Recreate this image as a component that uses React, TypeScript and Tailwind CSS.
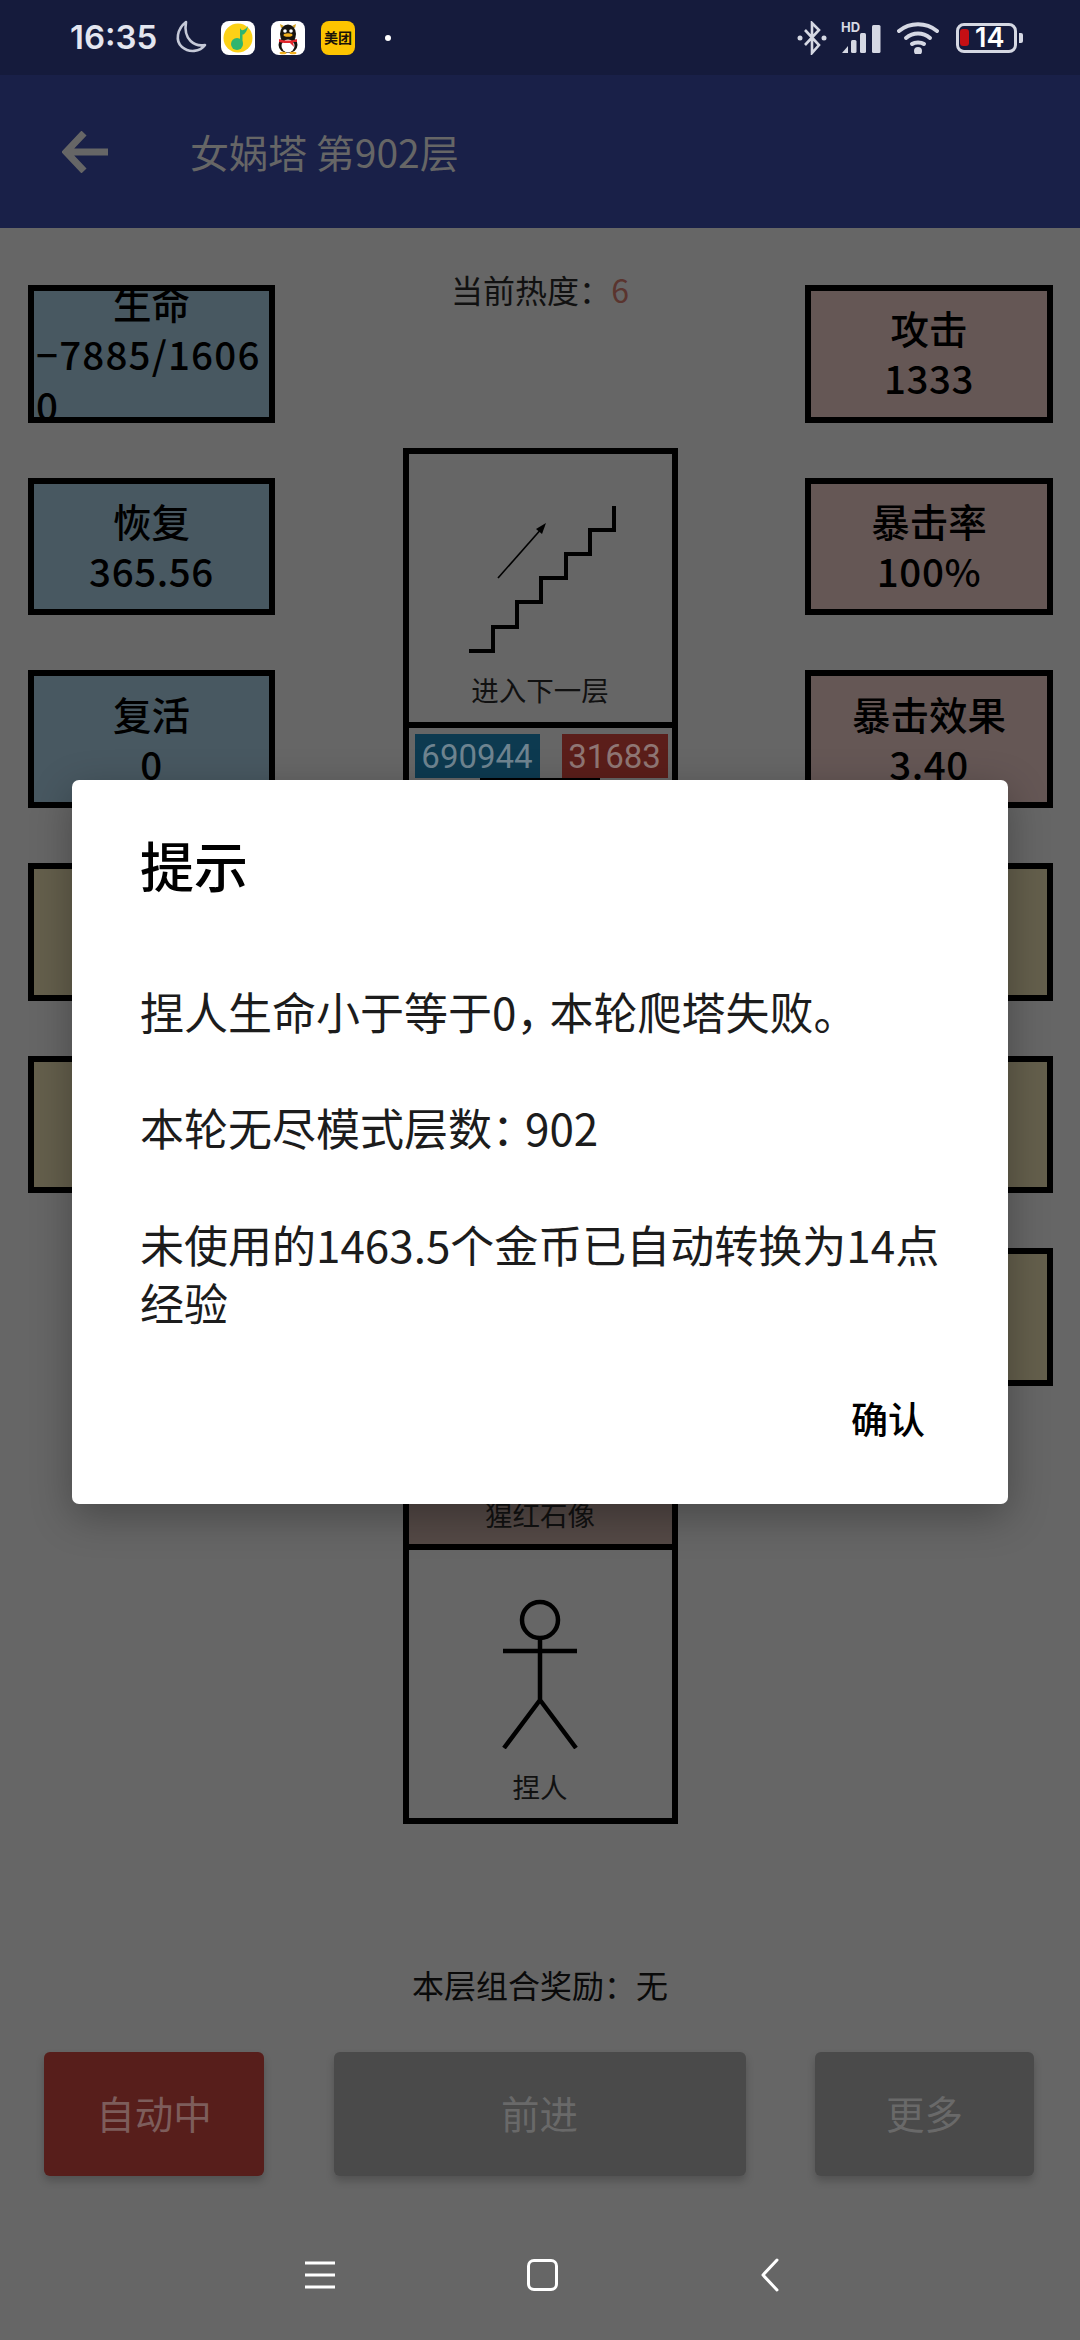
import React from 'react';

const Stat = ({ label, value, bg }: { label: string; value: string; bg: string }) => (
    <div className={`h-[137.5px] shrink-0 border-[6px] border-black flex flex-col items-center justify-center pb-[3px] text-[38.5px] leading-[50px] font-medium text-black ${bg}`}>
        <div>{label}</div>
        <div className="tracking-[0.6px]">{value}</div>
    </div>
);

const MusicIcon = () => (
    <svg width="34" height="34" viewBox="0 0 34 34">
        <rect width="34" height="34" rx="8" fill="#fff" />
        <circle cx="17" cy="17" r="14.5" fill="#fcd116" />
        <circle cx="16" cy="23" r="6" fill="#2fb56f" />
        <path d="M19 23 V7 C21 11 24 9 27 5 C26 11 23 14 21.5 13.5 V23 Z" fill="#2fb56f" />
    </svg>
);

const PenguinIcon = () => (
    <svg width="34" height="34" viewBox="0 0 34 34">
        <rect width="34" height="34" rx="8" fill="#fff" />
        <path d="M10 7 L9 3 L13 5 M24 7 L25 3 L21 5" fill="#d7a21d" />
        <ellipse cx="17" cy="13" rx="8" ry="9.5" fill="#17130f" />
        <ellipse cx="17" cy="24" rx="9.5" ry="8" fill="#17130f" />
        <ellipse cx="17" cy="25" rx="6.5" ry="6.5" fill="#fff" />
        <circle cx="14" cy="10" r="1.8" fill="#fff" />
        <circle cx="20" cy="10" r="1.8" fill="#fff" />
        <ellipse cx="17" cy="14" rx="4.5" ry="1.8" fill="#f2b01e" />
        <path d="M8 18 C13 20 21 20 26 18 L26 21 L22 21 L23 26 L19 22 C15 22 11 22 8 21 Z" fill="#e3262a" />
        <ellipse cx="12" cy="32" rx="3.5" ry="1.3" fill="#f2b01e" />
        <ellipse cx="22" cy="32" rx="3.5" ry="1.3" fill="#f2b01e" />
    </svg>
);

const StatusBar = () => (
    <div className="h-[75px] bg-[#151b3c] flex items-center shrink-0 pl-[70px] pr-[57px] font-['Inter','Noto_Sans_CJK_SC',sans-serif]">
        <span className="text-[33px] font-semibold text-[#e3e6f0] w-[104px] leading-none">16:35</span>
        <svg width="33" height="34" viewBox="0 0 33 34" fill="none" className="-mt-[1px]">
            <path d="M12 2 C3 9 1 21 8 27 C15 33 26 32 31 25 C21 27 9 20 12 2 Z" stroke="#c5c9d8" strokeWidth="2.6" strokeLinejoin="round" />
        </svg>
        <div className="ml-[14px]"><MusicIcon /></div>
        <div className="ml-[16px]"><PenguinIcon /></div>
        <div className="ml-[16px] w-[34px] h-[34px] rounded-[8px] bg-[#fdc400] flex items-center justify-center text-[14px] leading-none font-bold text-[#1a1208] whitespace-nowrap">美团</div>
        <div className="ml-[30px] w-[6px] h-[6px] rounded-full bg-white" />
        <div className="flex-1" />
        <svg width="30" height="34" viewBox="0 0 30 34" fill="none">
            <path d="M8 9 L22 24 L15 32 V2 L22 9 L8 24" stroke="#d5d8e3" strokeWidth="2.6" />
            <circle cx="3" cy="17" r="2.5" fill="#d5d8e3" />
            <circle cx="27" cy="17" r="2.5" fill="#d5d8e3" />
        </svg>
        <div className="relative ml-[14px] w-[40px] h-[32px]">
            <span className="absolute left-0 -top-[1px] text-[13px] leading-[13px] font-bold text-[#d5d8e3]">HD</span>
            <svg width="40" height="32" viewBox="0 0 40 32" fill="#d5d8e3" className="absolute inset-0">
                <path d="M1 31 L7 24 V31 Z" />
                <rect x="10" y="18" width="5.5" height="13" rx="1.5" />
                <rect x="19" y="11" width="6" height="20" rx="1.5" />
                <rect x="31" y="3" width="8.5" height="28" rx="1.5" />
            </svg>
        </div>
        <svg width="42" height="32" viewBox="0 0 42 32" fill="none" stroke="#d5d8e3" strokeWidth="4" strokeLinecap="round" className="ml-[16px]">
            <path d="M2 9 C13 0 29 0 40 9" />
            <path d="M9 16 C16 10 26 10 33 16" />
            <path d="M15 22 C18 20 24 20 27 22" />
            <circle cx="21" cy="29" r="2" fill="#d5d8e3" />
        </svg>
        <div className="ml-[17px] relative w-[61px] h-[30px] rounded-[8px] border-[3.5px] border-[#d5d8e3] flex items-center">
            <div className="ml-[1px] w-[9px] h-[17px] rounded-[3px] bg-[#c40f14]" />
            <span className="ml-[6px] text-[27px] leading-none font-semibold text-white">14</span>
        </div>
        <div className="ml-[2px] w-[4px] h-[10px] rounded-r-[2px] bg-[#d5d8e3]" />
    </div>
);

const App = () => {
    return (
        <div className="relative w-[1080px] h-[2340px] bg-[#666666] overflow-hidden flex flex-col font-['Noto_Sans_CJK_SC',sans-serif]">
            <StatusBar />

            {/* App bar */}
            <div className="h-[153px] bg-[#192048] flex items-center shrink-0 pl-[62px]">
                <svg width="46" height="42" viewBox="0 0 46 42" fill="none" stroke="#666666" strokeWidth="7">
                    <path d="M22 2 L4 21 L22 40 M4 21 H46" />
                </svg>
                <span className="ml-[82px] text-[39px] text-[#666666] whitespace-nowrap">女娲塔 第902层</span>
            </div>

            {/* Board */}
            <div className="flex justify-between pl-[28px] pr-[27px] h-[1596px] shrink-0">
                <div className="w-[247px] flex flex-col gap-[55.2px] pt-[57px]">
                    <div className="h-[137.5px] shrink-0 border-[6px] border-black bg-[#485861] overflow-hidden flex flex-col justify-center text-[38.5px] leading-[51px] font-medium text-black">
                        <div className="text-center shrink-0">生命</div>
                        <div className="shrink-0 break-all pl-[2px] tracking-[1.2px]">−7885/16060</div>
                    </div>
                    <Stat label="恢复" value="365.56" bg="bg-[#485861]" />
                    <Stat label="复活" value="0" bg="bg-[#485861]" />
                    <div className="h-[137.5px] shrink-0 border-[6px] border-black bg-[#645f4c]" />
                    <div className="h-[137.5px] shrink-0 border-[6px] border-black bg-[#645f4c]" />
                </div>

                <div className="w-[275px] flex flex-col items-center">
                    <div className="h-[220px] w-full shrink-0 pt-[37px] text-center text-[32px] leading-[48px] text-[#111111] whitespace-nowrap">
                        当前热度：<span className="text-[#5a342e]">6</span>
                    </div>

                    <div className="h-[280px] w-full shrink-0 border-[6px] border-black flex flex-col items-center">
                        <svg width="150" height="152" viewBox="0 0 150 152" fill="none" stroke="#000" className="mt-[50px] ml-[5px] shrink-0">
                            <path d="M1 147 H25 V123 H49 V98 H73 V74 H98 V50 H122 V26 H146 V2" strokeWidth="4" />
                            <path d="M30 74 L75 23" strokeWidth="1.6" />
                            <path d="M78 19 L74 30 L68 25 Z" fill="#000" stroke="none" />
                        </svg>
                        <div className="text-[27.5px] leading-[36px] text-[#111111] mt-[15px]">进入下一层</div>
                    </div>

                    <div className="h-[280px] w-full -mt-[6px] shrink-0 border-[6px] border-black">
                        <div className="flex justify-between pl-[6px] pr-[4px] pt-[6px]">
                            <div className="w-[125px] h-[44px] bg-[#0d3a50] text-center text-[33px] leading-[46px] text-[#6f8490] font-['Roboto',sans-serif]">690944</div>
                            <div className="w-[106px] h-[44px] bg-[#5b1e1a] text-center text-[33px] leading-[46px] text-[#8f7674] font-['Roboto',sans-serif]">31683</div>
                        </div>
                        <div className="w-[120px] h-[8px] mx-auto bg-black" />
                    </div>

                    <div className="h-[280px] w-full -mt-[6px] shrink-0 border-[6px] border-black" />

                    <div className="h-[280px] w-full -mt-[6px] shrink-0 border-[6px] border-black bg-[#544946] flex flex-col justify-end items-center">
                        <div className="text-[27.5px] leading-[36px] text-[#111111] pb-[12px]">猩红石像</div>
                    </div>

                    <div className="h-[280px] w-full -mt-[6px] shrink-0 border-[6px] border-black flex flex-col items-center">
                        <svg width="78" height="150" viewBox="0 0 78 150" fill="none" stroke="#000" strokeWidth="4.5" className="mt-[49px] shrink-0">
                            <circle cx="39" cy="21" r="18" />
                            <path d="M39 40 V101 M2 52 H76 M39 101 L3 149 M39 101 L75 149" />
                        </svg>
                        <div className="text-[27.5px] leading-[36px] text-[#111111] mt-[19px]">捏人</div>
                    </div>
                </div>

                <div className="w-[248px] flex flex-col gap-[55.2px] pt-[57px]">
                    <Stat label="攻击" value="1333" bg="bg-[#655755]" />
                    <Stat label="暴击率" value="100%" bg="bg-[#655755]" />
                    <Stat label="暴击效果" value="3.40" bg="bg-[#655755]" />
                    <div className="h-[137.5px] shrink-0 border-[6px] border-black bg-[#645f4c]" />
                    <div className="h-[137.5px] shrink-0 border-[6px] border-black bg-[#645f4c]" />
                    <div className="h-[137.5px] shrink-0 border-[6px] border-black bg-[#645f4c]" />
                </div>
            </div>

            {/* Bottom actions */}
            <div className="text-center text-[32px] leading-[48px] text-[#0a0a0a] mt-[136px] shrink-0 whitespace-nowrap">本层组合奖励：无</div>
            <div className="flex justify-between pl-[44px] pr-[46px] mt-[44px] shrink-0 text-[38.5px]">
                <div className="w-[220px] h-[124px] rounded-[6px] bg-[#571e1b] text-[#7d5d5b] flex items-center justify-center pb-[3px] shadow-[0_5px_8px_rgba(0,0,0,0.2)]">自动中</div>
                <div className="w-[412px] h-[124px] rounded-[6px] bg-[#4a4a4a] text-[#696969] flex items-center justify-center pb-[3px] shadow-[0_5px_8px_rgba(0,0,0,0.2)]">前进</div>
                <div className="w-[219px] h-[124px] rounded-[6px] bg-[#4a4a4a] text-[#696969] flex items-center justify-center pb-[3px] shadow-[0_5px_8px_rgba(0,0,0,0.2)]">更多</div>
            </div>

            {/* Nav bar */}
            <div className="flex items-center mt-[82px] pl-[305px] shrink-0">
                <svg width="30" height="28" viewBox="0 0 30 28" stroke="#fff" strokeWidth="3">
                    <path d="M0 2 H30 M0 14 H30 M0 26 H30" />
                </svg>
                <div className="ml-[192px] w-[31px] h-[32px] rounded-[7px] border-[3px] border-white" />
                <svg width="19" height="34" viewBox="0 0 19 34" fill="none" stroke="#fff" strokeWidth="3" strokeLinecap="round" strokeLinejoin="round" className="ml-[202px]">
                    <path d="M17 2 L3 17 L17 32" />
                </svg>
            </div>

            {/* Dialog */}
            <div className="absolute left-[72px] top-[780px] w-[936px] h-[724px] bg-white rounded-[7px] shadow-[0_12px_40px_rgba(0,0,0,0.3)]">
                <div className="pl-[68px] pr-[68px] pt-[47px]">
                    <h2 className="text-[54px] leading-[76px] font-medium text-black">提示</h2>
                    <div className="mt-[79px] text-[44px] leading-[58px] text-[#1c1c1c]">
                        <p>捏人生命小于等于0<span className="tracking-[-11px]">，</span>本轮爬塔失败。</p>
                        <p className="mt-[58px]">本轮无尽模式层数<span className="tracking-[-11px]">：</span>902</p>
                        <p className="mt-[59px]">未使用的1463.5个金币已自动转换为14点经验</p>
                    </div>
                </div>
                <div className="absolute right-[83px] top-[612px] text-[37px] leading-[52px] font-medium text-black">确认</div>
            </div>
        </div>
    );
};

export default App;
